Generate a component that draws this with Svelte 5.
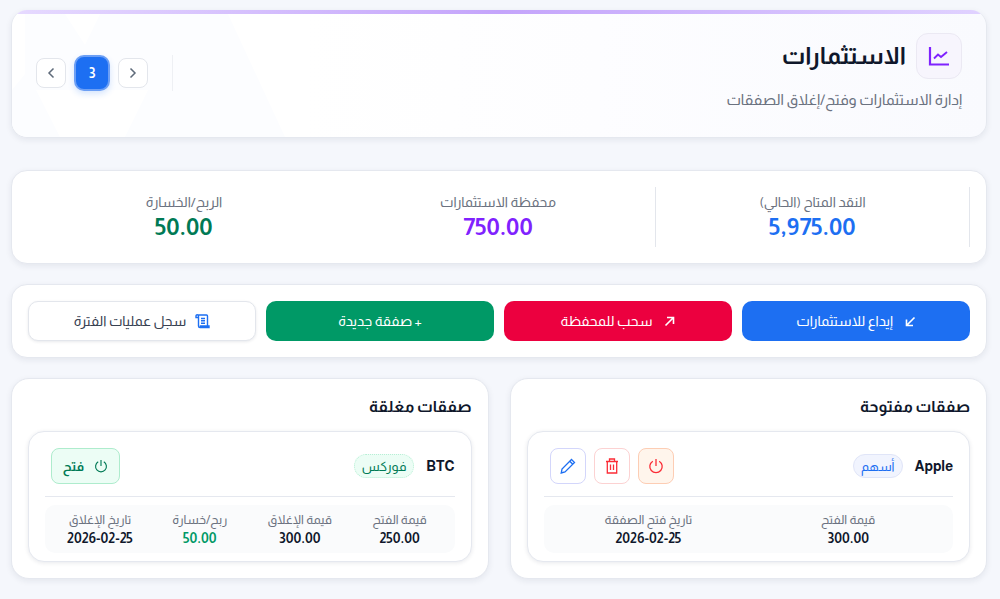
<script>
  const stats = [
    { label: 'النقد المتاح (الحالي)', value: '5,975.00', tone: 'blue' },
    { label: 'محفظة الاستثمارات', value: '750.00', tone: 'purple' },
    { label: 'الربح/الخسارة', value: '50.00', tone: 'green' }
  ];
  const closedMeta = [
    { label: 'قيمة الفتح', value: '250.00' },
    { label: 'قيمة الإغلاق', value: '300.00' },
    { label: 'ربح/خسارة', value: '50.00', profit: true },
    { label: 'تاريخ الإغلاق', value: '2026-02-25' }
  ];
  const openMeta = [
    { label: 'قيمة الفتح', value: '300.00' },
    { label: 'تاريخ فتح الصفقة', value: '2026-02-25' }
  ];
</script>

<div class="page" dir="rtl">
  <header class="card hero">
    <svg class="hero-shape" viewBox="0 0 300 123" aria-hidden="true">
      <path d="M13 0H53L73 31L88 0H216L273 123H113L136 76H24L48 123H0V76L13 60Z" fill="#fcfdff" />
    </svg>
    <div class="hero-text">
      <div class="hero-title">
        <span class="hero-icon">
          <svg width="22" height="20" viewBox="0 0 22 20" fill="none" stroke="#7f22fe" stroke-width="2.2">
            <path d="M2 1V18.5H21" />
            <path d="M6 12.5L10 8.5L13 11L19 6" stroke-width="1.9" />
          </svg>
        </span>
        <h1>الاستثمارات</h1>
      </div>
      <p>إدارة الاستثمارات وفتح/إغلاق الصفقات</p>
    </div>
    <div class="pager" dir="ltr">
      <button class="page-btn" aria-label="السابق">
        <svg width="10" height="12" viewBox="0 0 10 12" fill="none" stroke="#5f6b7a" stroke-width="1.5"><path d="M7.5 1.5L3 6L7.5 10.5" /></svg>
      </button>
      <button class="page-current">3</button>
      <button class="page-btn" aria-label="التالي">
        <svg width="10" height="12" viewBox="0 0 10 12" fill="none" stroke="#5f6b7a" stroke-width="1.5"><path d="M2.5 1.5L7 6L2.5 10.5" /></svg>
      </button>
      <span class="pager-line"></span>
    </div>
  </header>

  <section class="card stats">
    {#each stats as s}
      <div class="stat">
        <span class="stat-label">{s.label}</span>
        <strong class={s.tone}>{s.value}</strong>
      </div>
    {/each}
  </section>

  <section class="card actions">
    <button class="act act-blue">
      <svg width="11" height="11" viewBox="0 0 11 11" fill="none" stroke="#fff" stroke-width="1.6"><path d="M9.5 1.5L2 9M1.5 3.5V9.5H8" /></svg>
      إيداع للاستثمارات
    </button>
    <button class="act act-red">
      <svg width="11" height="11" viewBox="0 0 11 11" fill="none" stroke="#fff" stroke-width="1.6"><path d="M1.5 9.5L9 2M3 1.5H9.5V8" /></svg>
      سحب للمحفظة
    </button>
    <button class="act act-green">+ صفقة جديدة</button>
    <button class="act act-plain">
      <svg width="15" height="15" viewBox="0 0 15 15" fill="none" stroke="#1d6ff2" stroke-width="1.4">
        <path d="M3.5 3.5H1V2A1 1 0 0 1 3.5 2V12A1.5 1.5 0 0 0 5 13.5H14V12H5.5V13.3M2.5 1H11.5A1 1 0 0 1 12.5 2V12" />
        <path d="M6 4.5H10M6 6.8H10M6 9.2H10" />
      </svg>
      سجل عمليات الفترة
    </button>
  </section>

  <div class="panels">
    <section class="card panel">
      <h2>صفقات مفتوحة</h2>
      <article class="deal">
        <div class="deal-head">
          <span class="deal-name">Apple</span>
          <span class="tag tag-blue">أسهم</span>
          <div class="tools" dir="ltr">
            <button class="tool tool-edit" aria-label="تعديل">
              <svg width="16" height="16" viewBox="0 0 16 16" fill="none" stroke="#1d6ff2" stroke-width="1.3">
                <path d="M11.5 1.5L14.5 4.5L5 14L1.2 15L2 11Z" />
                <path d="M9.8 3.2L12.8 6.2" />
              </svg>
            </button>
            <button class="tool tool-del" aria-label="حذف">
              <svg width="14" height="16" viewBox="0 0 14 16" fill="none" stroke="#fb2c36" stroke-width="1.3">
                <path d="M1 3.5H13M4.5 3.5V1H9.5V3.5M2.3 3.5V15H11.7V3.5M5.5 6.5V12M8.5 6.5V12" />
              </svg>
            </button>
            <button class="tool tool-off" aria-label="إغلاق">
              <svg width="16" height="16" viewBox="0 0 16 16" fill="none" stroke="#fb2c36" stroke-width="1.3">
                <path d="M8 1V8M4.8 3.2A6.2 6.2 0 1 0 11.2 3.2" />
              </svg>
            </button>
          </div>
        </div>
        <div class="meta meta-2">
          {#each openMeta as m}
            <div class="meta-item">
              <span>{m.label}</span>
              <b>{m.value}</b>
            </div>
          {/each}
        </div>
      </article>
    </section>

    <section class="card panel">
      <h2>صفقات مغلقة</h2>
      <article class="deal">
        <div class="deal-head">
          <span class="deal-name">BTC</span>
          <span class="tag tag-green">فوركس</span>
          <div class="tools" dir="ltr">
            <button class="tool tool-open">
              فتح
              <svg width="14" height="14" viewBox="0 0 16 16" fill="none" stroke="#007a55" stroke-width="1.3">
                <path d="M8 1V8M4.8 3.2A6.2 6.2 0 1 0 11.2 3.2" />
              </svg>
            </button>
          </div>
        </div>
        <div class="meta meta-4">
          {#each closedMeta as m}
            <div class="meta-item">
              <span>{m.label}</span>
              <b class:profit={m.profit}>{m.value}</b>
            </div>
          {/each}
        </div>
      </article>
    </section>
  </div>
</div>

<style>
  :global(body) {
    background: #f5f7fc;
    font-family: Almarai, "DejaVu Sans", sans-serif;
  }

  .page {
    display: flex;
    flex-direction: column;
    padding: 10px 13px 0 11px;
    height: 589px;
    overflow: hidden;
  }

  .card {
    background: #fff;
    border: 1px solid #e5e8ef;
    border-radius: 16px;
    box-shadow: 0 2px 6px rgba(30, 41, 70, 0.08);
  }

  button {
    font-family: inherit;
    cursor: pointer;
  }

  .hero {
    position: relative;
    overflow: hidden;
    height: 128px;
    box-sizing: border-box;
    display: flex;
    justify-content: space-between;
    padding: 23px 24px 0;
    border-top: 0;
    background: linear-gradient(270deg, #f9fafe 0%, #fdfdff 40%, #fff 70%);
    margin-bottom: 32px;
  }

  .hero::before {
    content: '';
    position: absolute;
    top: 0;
    left: 0;
    right: 0;
    height: 4px;
    background: linear-gradient(90deg, #e6daff 0%, #c4a4fb 50%, #e0d2ff 100%);
  }

  .hero-shape {
    position: absolute;
    left: 0;
    top: 4px;
    width: 300px;
    height: 123px;
  }

  .hero-text {
    position: relative;
  }

  .hero-title {
    display: flex;
    align-items: center;
    gap: 10px;
  }

  .hero-icon {
    width: 46px;
    height: 46px;
    box-sizing: border-box;
    display: flex;
    align-items: center;
    justify-content: center;
    background: #f7f5fd;
    border: 1px solid #ebe9f3;
    border-radius: 12px;
  }

  h1 {
    margin: 0;
    font-size: 24px;
    line-height: 46px;
    font-weight: 700;
    color: #0f172b;
  }

  .hero-text p {
    margin: 9px 0 0;
    font-size: 15px;
    line-height: 24px;
    color: #6b7280;
  }

  .pager {
    position: relative;
    display: flex;
    align-items: center;
    gap: 8px;
    height: 36px;
    margin-top: 22px;
  }

  .page-btn {
    width: 30px;
    height: 30px;
    padding: 0;
    display: flex;
    align-items: center;
    justify-content: center;
    background: #fff;
    border: 1px solid #e3e6ec;
    border-radius: 8px;
  }

  .page-current {
    width: 36px;
    height: 36px;
    padding: 0;
    background: #1d6ff2;
    border: 2px solid #6c9ff5;
    border-radius: 10px;
    color: #fff;
    font-size: 14px;
    font-weight: 700;
    box-shadow: 0 3px 6px rgba(29, 111, 242, 0.18);
  }

  .pager-line {
    width: 1px;
    height: 36px;
    background: #eef0f4;
    margin-left: 16px;
  }

  .stats {
    height: 94px;
    box-sizing: border-box;
    display: grid;
    grid-template-columns: 315px 314px 314px;
    align-content: center;
    padding: 0 16px 0 14px;
    margin-bottom: 20px;
  }

  .stat {
    height: 60px;
    display: flex;
    flex-direction: column;
    align-items: center;
    justify-content: center;
  }

  .stat:first-child {
    border-inline: 1px solid #e3e6ec;
  }

  .stat-label {
    font-size: 14px;
    color: #6b7280;
    line-height: 20px;
  }

  .stat strong {
    font-size: 24px;
    font-weight: 700;
    line-height: 30px;
  }

  .blue { color: #1d6ff2; }
  .purple { color: #7f22fe; }
  .green { color: #007a55; }

  .actions {
    height: 74px;
    box-sizing: border-box;
    display: grid;
    grid-template-columns: repeat(4, 1fr);
    gap: 10px;
    align-items: center;
    padding: 0 16px;
    margin-bottom: 20px;
  }

  .act {
    height: 40px;
    display: flex;
    align-items: center;
    justify-content: center;
    gap: 12px;
    border: 0;
    border-radius: 10px;
    color: #fff;
    font-size: 14px;
  }

  .act-blue { background: #1d6ff2; }
  .act-red { background: #ec003f; }
  .act-green { background: #009966; }

  .act-plain {
    background: #fff;
    color: #374151;
    border: 1px solid #e3e6ec;
    box-shadow: 0 1px 3px rgba(30, 41, 70, 0.1);
    gap: 9px;
  }

  .panels {
    display: grid;
    grid-template-columns: 1fr 1fr;
    gap: 21px;
  }

  .panel {
    height: 201px;
    box-sizing: border-box;
    padding: 16px;
    border-radius: 18px;
  }

  h2 {
    margin: 0;
    font-size: 16px;
    font-weight: 700;
    color: #0f172b;
    line-height: 24px;
  }

  .deal {
    margin-top: 12px;
    height: 131px;
    box-sizing: border-box;
    background: #fff;
    border: 1px solid #e5e8ef;
    border-radius: 16px;
    padding: 16px;
    box-shadow: 0 1px 4px rgba(30, 41, 70, 0.1);
  }

  .deal-head {
    display: flex;
    align-items: center;
    gap: 12px;
    height: 49px;
    margin-bottom: 8px;
    padding-bottom: 12px;
    box-sizing: border-box;
    border-bottom: 1px solid #e5e8ef;
  }

  .deal-name {
    font-size: 14px;
    font-weight: 700;
    color: #0f172b;
  }

  .tag {
    height: 24px;
    display: flex;
    align-items: center;
    padding: 0 7px;
    border-radius: 12px;
    font-size: 13px;
    box-sizing: border-box;
  }

  .tag-blue {
    background: #f1f4fe;
    border: 1px solid #e0e5f8;
    color: #1d6ff2;
  }

  .tag-green {
    background: #ecfdf5;
    border: 1px dotted #b7efd5;
    color: #007a55;
  }

  .tools {
    margin-right: auto;
    display: flex;
    gap: 8px;
    padding-left: 6px;
  }

  .tool {
    width: 36px;
    height: 36px;
    padding: 0;
    display: flex;
    align-items: center;
    justify-content: center;
    background: #fff;
    border-radius: 8px;
  }

  .tool-edit { border: 1px solid #d3d6fb; }
  .tool-del { border: 1px solid #fcd2d2; }

  .tool-off {
    background: #fff5ec;
    border: 1px solid #fdcdb4;
  }

  .tool-open {
    width: 69px;
    gap: 10px;
    background: #ecfdf5;
    border: 1px solid #aeeccd;
    color: #007a55;
    font-size: 13px;
    font-weight: 700;
  }

  .meta {
    display: grid;
    gap: 6px;
    height: 48px;
    box-sizing: border-box;
    padding: 0 8px;
    align-items: center;
    background: #fafbfc;
    border-radius: 10px;
  }

  .meta-2 { grid-template-columns: repeat(2, 1fr); }
  .meta-4 { grid-template-columns: repeat(4, 1fr); }

  .meta-item {
    display: flex;
    flex-direction: column;
    align-items: center;
    gap: 2px;
  }

  .meta-item span {
    font-size: 12.5px;
    color: #6b7280;
    line-height: 16px;
  }

  .meta-item b {
    font-size: 14px;
    font-weight: 700;
    color: #0f172b;
    line-height: 16px;
  }

  .meta-item b.profit { color: #009966; }
</style>
